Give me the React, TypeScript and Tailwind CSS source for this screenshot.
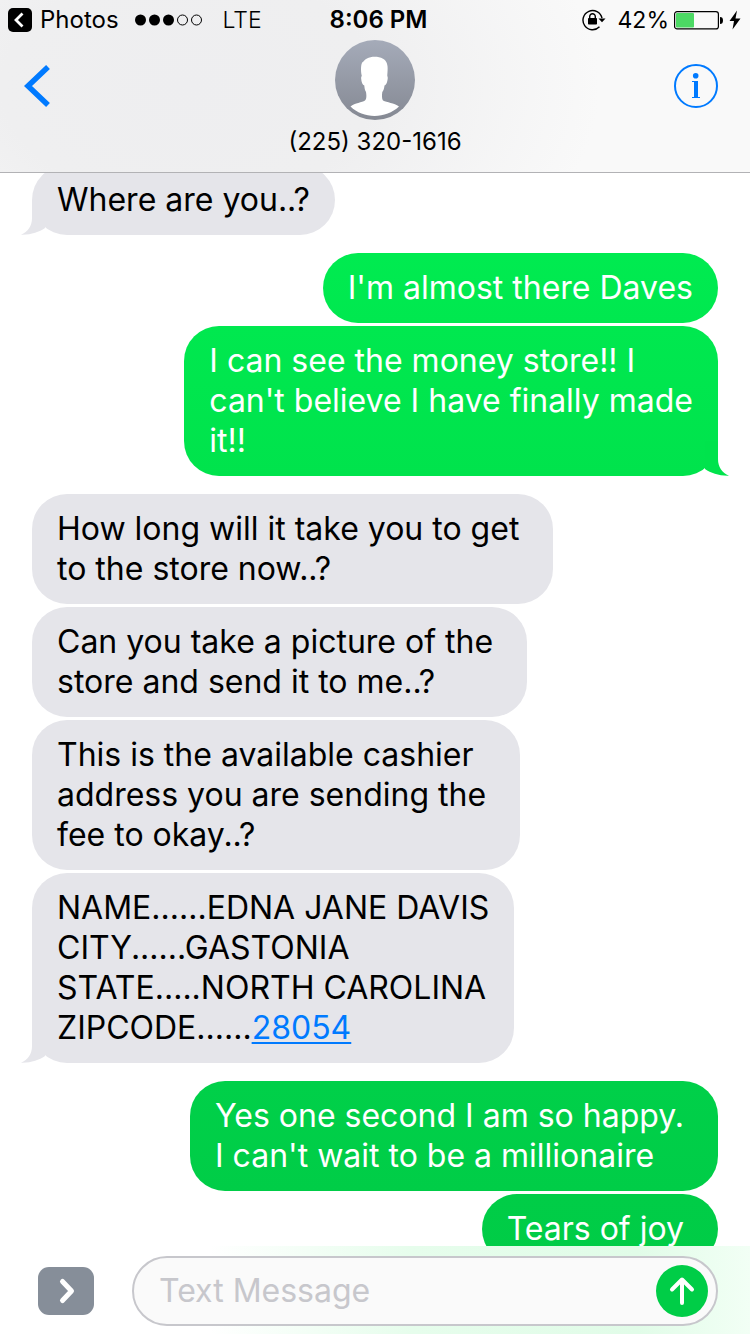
import { ReactNode } from "react";

type Message = {
  from: "them" | "me";
  lines: ReactNode[];
  tail?: boolean;
  tone?: string;
  tailTone?: string;
};

const messages: Message[] = [
  { from: "them", lines: ["Where are you..?"], tail: true },
  { from: "me", lines: ["I'm almost there Daves"], tone: "from-[#00eb50] to-[#00e84f]" },
  {
    from: "me",
    lines: ["I can see the money store!! I", "can't believe I have finally made", "it!!"],
    tail: true,
    tone: "from-[#00e84f] to-[#00e34c]",
    tailTone: "text-[#00e34c]",
  },
  { from: "them", lines: ["How long will it take you to get ", "to the store now..?"] },
  { from: "them", lines: ["Can you take a picture of the ", "store and send it to me..?"] },
  { from: "them", lines: ["This is the available cashier ", "address you are sending the ", "fee to okay..?"] },
  {
    from: "them",
    tail: true,
    lines: [
      "NAME......EDNA JANE DAVIS",
      "CITY......GASTONIA",
      "STATE.....NORTH CAROLINA",
      <>
        ZIPCODE......
        <a href="#zip" className="text-[#007aff] underline decoration-2 underline-offset-[3px]">
          28054
        </a>
      </>,
    ],
  },
  {
    from: "me",
    lines: ["Yes one second I am so happy. ", "I can't wait to be a millionaire"],
    tone: "from-[#00d049] to-[#00cd47]",
  },
  { from: "me", lines: ["Tears of joy "], tone: "from-[#00cd47] to-[#00cc46]" },
];

function Tail({ mine, tone }: { mine: boolean; tone: string }) {
  return (
    <svg
      viewBox="0 0 24 35"
      aria-hidden="true"
      className={`absolute bottom-0 h-[35px] w-6 ${mine ? "-right-[11px] -scale-x-100" : "-left-[11px]"} ${tone}`}
    >
      <path fill="currentColor" d="M11 0V18C11 26 7 32 0 34.7C10 35 18 32 24 28V0Z" />
    </svg>
  );
}

function Bubble({ message, gap }: { message: Message; gap: string }) {
  const mine = message.from === "me";
  return (
    <li
      className={`relative w-fit max-w-[80%] rounded-[35px] px-[25px] py-[15px] text-[32px] leading-10 whitespace-pre ${gap} ${
        mine ? `self-end bg-linear-to-b text-white ${message.tone}` : "self-start bg-[#e5e5ea] text-black"
      }`}
    >
      {message.tail && <Tail mine={mine} tone={mine ? message.tailTone ?? "" : "text-[#e5e5ea]"} />}
      <p className="relative">
        {message.lines.map((line, index) => (
          <span key={index} className="block">
            {line}
          </span>
        ))}
      </p>
    </li>
  );
}

function StatusBar() {
  return (
    <div className="grid h-10 grid-cols-[1fr_auto_1fr] items-center pr-[9px] pl-2 text-[24px] leading-10">
      <div className="flex items-center">
        <a href="#photos" className="flex items-center gap-2">
          <svg viewBox="0 0 24 24" className="size-6" aria-hidden="true">
            <rect width="24" height="24" rx="5" />
            <path d="M14.500 5.500L8 12l6.500 6.500" fill="none" stroke="#fff" strokeWidth="2.800" />
          </svg>
          Photos
        </a>
        <svg viewBox="0 0 68 12" className="ml-4 h-3 w-[68px]" aria-label="Signal strength">
          <circle cx="5.500" cy="6" r="5.500" />
          <circle cx="19.500" cy="6" r="5.500" />
          <circle cx="33.500" cy="6" r="5.500" />
          <circle cx="47.500" cy="6" r="5" fill="none" stroke="#000" />
          <circle cx="61.500" cy="6" r="5" fill="none" stroke="#000" />
        </svg>
        <span className="ml-5 text-[23px] font-light">LTE</span>
      </div>
      <span className="pl-2 font-semibold">8:06 PM</span>
      <div className="flex items-center justify-end">
        <svg viewBox="0 0 24 22" className="mr-3 h-[22px] w-6" aria-label="Rotation lock">
          <path d="M20 9.200A9.600 9.600 0 1 0 17.500 17.800" fill="none" stroke="#000" strokeWidth="1.400" />
          <path d="M16.500 9.500H23.500L20 13.200Z" />
          <rect x="6" y="9" width="9" height="6.500" rx=".8" />
          <path d="M7.700 9.500V7.500a2.800 2.800 0 0 1 5.600 0v2" fill="none" stroke="#000" strokeWidth="1.400" />
        </svg>
        <span className="text-[23px]">42%</span>
        <svg viewBox="0 0 49 20" className="ml-[5px] h-5 w-[49px]" aria-label="Battery">
          <rect x=".6" y="1.600" width="43.800" height="17.300" rx="2.500" fill="none" stroke="#000" strokeWidth="1.200" />
          <rect x="2" y="3" width="18" height="14.500" rx="1" fill="#4cd964" />
          <path d="M46 7c2 0 3 1 3 3.500S48 14 46 14Z" />
        </svg>
        <svg viewBox="0 0 12 20" className="ml-[6px] h-5 w-3" aria-label="Charging">
          <path d="M8 .5L.5 11H5L3.500 19.500L11.500 8.500H6.500Z" />
        </svg>
      </div>
    </div>
  );
}

function Header() {
  return (
    <header className="relative z-10 shrink-0 border-b border-[#b2b2b5] bg-[#f9f9f9] bg-[radial-gradient(ellipse_55%_150%_at_25%_50%,#eeeef0_0%,#efeff0_45%,#f9f9f9_100%)]">
      <StatusBar />
      <div className="grid grid-cols-[1fr_auto_1fr] items-start pr-8 pl-6">
        <button aria-label="Back" className="mt-[25px] w-fit">
          <svg viewBox="0 0 28 42" className="h-[42px] w-7" aria-hidden="true">
            <path d="M24 2L4 21L24 40" fill="none" stroke="#007aff" strokeWidth="5.500" />
          </svg>
        </button>
        <div className="ml-2 flex flex-col items-center">
          <svg viewBox="0 0 80 80" className="size-20" aria-hidden="true">
            <defs>
              <linearGradient id="avatar" x1="0" y1="0" x2="0" y2="1">
                <stop offset="0" stopColor="#a5abb9" />
                <stop offset="1" stopColor="#858993" />
              </linearGradient>
            </defs>
            <circle cx="40" cy="40" r="40" fill="url(#avatar)" />
            <path
              fill="#fff"
              d="M15.500 66.500C20 63 27 62.500 30 60.500C31.800 59 31.500 55 31 52C29.800 50 29.500 48 29.300 45.500C27.500 45 26.500 42 26.200 39C26 37.500 26.200 36.500 26.800 36C25.500 30 26 24.500 27.200 22.500C29 21 30 19.500 32 18.500C36 16.500 43 16 48 18.800C51.500 20.500 53 25 52.600 30C52.500 33 52.300 34.500 52.300 36C53 37 52.800 39 52.300 41C51.800 43.500 50.800 45.300 49.500 45.500C49.300 48 48.500 50.500 47.300 52C46.800 55 46.800 59 48 60.500C52 62.500 59 63 64 66.500C51 79 28 79 15.500 66.500Z"
            />
          </svg>
          <h1 className="mt-1 mb-3 text-[24px] leading-9">(225) 320-1616</h1>
        </div>
        <button aria-label="Details" className="mt-6 justify-self-end">
          <svg viewBox="0 0 44 44" className="size-11" fill="#007aff" aria-hidden="true">
            <circle cx="22" cy="22" r="21" fill="none" stroke="#007aff" strokeWidth="2" />
            <circle cx="21.700" cy="11.700" r="2.800" />
            <path d="M18 17H24V33H26V34H18V33H20V18H18Z" />
          </svg>
        </button>
      </div>
    </header>
  );
}

function Composer() {
  return (
    <form
      onSubmit={(event) => event.preventDefault()}
      className="relative z-10 flex shrink-0 items-center bg-white bg-[linear-gradient(90deg,#ffffff_28%,#e6fdec_55%,#e1fce8_85%,#f2fff5_100%)] pt-[10px] pr-8 pb-2 pl-[38px]"
    >
      <button type="button" aria-label="More" className="rounded-[11px] bg-[#868e99]">
        <svg viewBox="0 0 56 48" className="h-12 w-14" aria-hidden="true">
          <path d="M24.500 14.500L33.500 24L24.500 33.500" fill="none" stroke="#fff" strokeWidth="5" strokeLinecap="round" strokeLinejoin="round" />
        </svg>
      </button>
      <div className="ml-[38px] flex h-[70px] min-w-0 flex-1 items-center rounded-[35px] border-2 border-[#c7c7cc] bg-[#fafafa] pr-2 pl-[25px]">
        <input
          type="text"
          aria-label="Message"
          placeholder="Text Message"
          className="min-w-0 flex-1 bg-transparent text-[32px] leading-10 outline-none placeholder:text-[#c7c7cc]"
        />
        <button type="submit" aria-label="Send" className="rounded-full bg-[#00cd47]">
          <svg viewBox="0 0 52 52" className="size-[52px]" aria-hidden="true">
            <path d="M26 38V15M16 24.500L26 14.500L36 24.500" fill="none" stroke="#fff" strokeWidth="4" strokeLinecap="round" strokeLinejoin="round" />
          </svg>
        </button>
      </div>
    </form>
  );
}

export default function App() {
  return (
    <div className="flex h-screen flex-col overflow-hidden bg-white font-['Inter','Liberation_Sans',sans-serif] text-black">
      <Header />
      <main className="min-h-0 flex-1 overflow-hidden">
        <ul className="-mt-2 flex flex-col px-8">
          {messages.map((message, index) => {
            const previous = messages[index - 1];
            const gap = !previous ? "" : previous.from === message.from ? "mt-[3px]" : "mt-[18px]";
            return <Bubble key={index} message={message} gap={gap} />;
          })}
        </ul>
      </main>
      <Composer />
    </div>
  );
}
